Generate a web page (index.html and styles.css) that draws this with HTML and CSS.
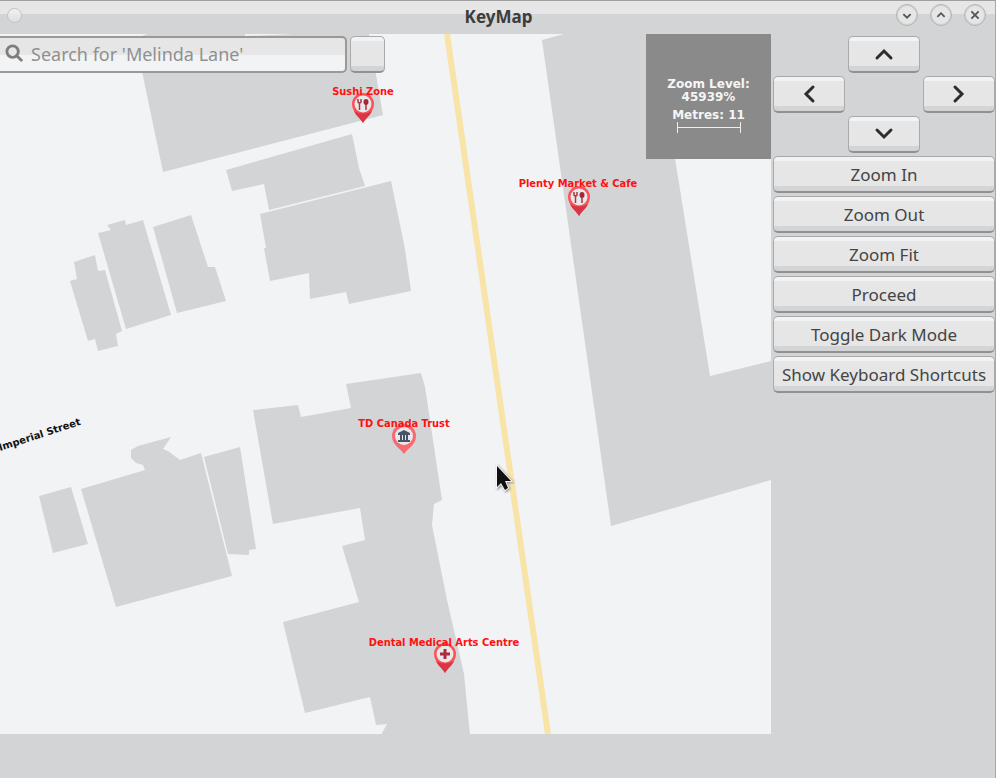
FILE: index.html
```html
<!DOCTYPE html>
<html lang="en">
<head>
<meta charset="utf-8">
<title>KeyMap</title>
<link rel="stylesheet" href="styles.css">
</head>
<body>
<div class="window">
  <header class="titlebar">
    <button class="menu-dot" aria-label="Window menu"></button>
    <h1 class="title">KeyMap</h1>
    <div class="window-buttons">
      <button class="round" aria-label="Minimize"><svg viewBox="0 0 22 22"><path d="M7 10l4 4 4-4"/></svg></button>
      <button class="round" aria-label="Maximize"><svg viewBox="0 0 22 22"><path d="M7 13l4-4 4 4"/></svg></button>
      <button class="round" aria-label="Close"><svg viewBox="0 0 22 22"><path d="M7 7l8 8M15 7l-8 8"/></svg></button>
    </div>
  </header>
  <main class="content">
    <section class="map-area">
      <svg class="map" viewBox="0 34 771 700" role="img" aria-label="Map">
        <defs>
          <g id="pin">
            <path class="pin-body" d="M0 17C-3 11-11 6-11-2A11 11 0 0 1 11-2C11 6 3 11 0 17Z"/>
            <path class="pin-shade" d="M-9 5Q0 10 9 5C7 10 3 12 0 17C-3 12-7 10-9 5Z"/>
            <circle class="pin-face" cy="-2" r="8.5"/>
          </g>
          <g id="food">
            <path class="fork" d="M-5-7v3q0 1 1.5 1t1.5-1v-3M-3.500-4v8"/>
            <ellipse class="spoon" cx="3" cy="-4" rx="2.500" ry="3"/>
            <path class="fork" d="M3-2v6"/>
          </g>
        </defs>
        <rect class="ground" y="34" width="771" height="700"/>
        <g class="buildings">
          <path d="M148 34L135 38L163 172L383 115L369 34H295L245 36V34Z"/>
          <path d="M226 170L352 134L359 168L365 186L269 210L264 184L232 191Z"/>
          <path d="M260 214L391 181L405 249L411 291L349 304L346 292L310 299L309 273L270 281L264 248H266Z"/>
          <path d="M98 233L111 230L107 225L125 220L126 225L143 220L171 315L126 329Z"/>
          <path d="M153 227L191 215L208 267L215 267L226 301L177 313Z"/>
          <path d="M74 262L95 255L98 271L105 270L122 331L116 334L118 346L98 351L95 339L88 341L70 281L77 279Z"/>
          <path d="M39 496L71 487L88 544L53 553Z"/>
          <path d="M81 489L145 470L143 465L136 463L131 458V450L138 446L171 437L163 449L168 451L180 460L201 453L232 576L116 607Z"/>
          <path d="M204 457L240 447L256 549L249 550V555L228 554Z"/>
          <path d="M253 410L298 405L301 417L351 408L346 384L421 373L425 387L442 500L434 504L432 525L447 600L464 674L470 735H381L387 724L376 725L370 697L305 713L283 622L359 602L342 546L365 540L360 508L273 524Z"/>
          <path d="M542 40L564 34H655L710 376L771 361V480L611 526Z"/>
        </g>
        <path class="road" d="M447 34L548 734"/>
        <text class="street" x="0" y="451" transform="rotate(-18 0 451)">Imperial Street</text>
        <g transform="translate(363 106)"><use href="#pin"/><use href="#food"/></g>
        <g transform="translate(579 199)"><use href="#pin"/><use href="#food"/></g>
        <g transform="translate(404 437)">
          <path class="pin-bank" d="M0 17C-3 12-12 8-12-1A12 12 0 0 1 12-1C12 8 3 12 0 17Z"/>
          <circle class="pin-face" cy="-1" r="9"/>
          <path class="bank" d="M-6-4L0-7L6-4V-2H4V3H6V5H-6V3H-4V-2H-6ZM-2-2V3H-1V-2ZM1-2V3H2V-2Z"/>
        </g>
        <g transform="translate(445 656)"><use href="#pin"/><path class="cross" d="M-5-2H5M0-7V3"/></g>
        <g class="places">
          <text x="363" y="95">Sushi Zone</text>
          <text x="578" y="187">Plenty Market &amp; Cafe</text>
          <text x="404" y="427">TD Canada Trust</text>
          <text x="444" y="646">Dental Medical Arts Centre</text>
        </g>
        <path class="cursor" d="M497 466V487L501 483L505 490L508 488L505 481H511Z"/>
      </svg>
      <form class="search">
        <label class="search-field">
          <svg class="glass" viewBox="0 0 20 20"><circle cx="8" cy="8" r="6"/><path d="M12 12l6 6"/></svg>
          <input type="text" aria-label="Search" placeholder="Search for 'Melinda Lane'">
        </label>
        <button class="btn search-go" type="button" aria-label="Search"></button>
      </form>
      <aside class="scale">
        <p>Zoom Level:<br>45939%</p>
        <p>Metres: 11</p>
        <div class="scale-bar"></div>
      </aside>
    </section>
    <nav class="controls">
      <div class="pad">
        <button class="btn up" aria-label="Up"><svg viewBox="0 0 20 20"><path d="M3 14l7-7 7 7"/></svg></button>
        <button class="btn left" aria-label="Left"><svg viewBox="0 0 20 20"><path d="M14 3l-7 7 7 7"/></svg></button>
        <button class="btn right" aria-label="Right"><svg viewBox="0 0 20 20"><path d="M6 3l7 7-7 7"/></svg></button>
        <button class="btn down" aria-label="Down"><svg viewBox="0 0 20 20"><path d="M3 6l7 7 7-7"/></svg></button>
      </div>
      <button class="btn">Zoom In</button>
      <button class="btn">Zoom Out</button>
      <button class="btn">Zoom Fit</button>
      <button class="btn">Proceed</button>
      <button class="btn">Toggle Dark Mode</button>
      <button class="btn">Show Keyboard Shortcuts</button>
    </nav>
  </main>
</div>
</body>
</html>
```
FILE: styles.css
```css
* { box-sizing: border-box; }
body { margin: 0; background: #d3d4d6; font-family: "Noto Sans", sans-serif; font-size: 18px; color: #444; }
.window { min-height: 100vh; border-top: 1px solid #a0a0a0; border-right: 1px solid #a8a8a8; }
.titlebar { height: 33px; display: grid; grid-template-columns: 1fr auto 1fr; align-items: center; padding: 0 9px 6px 7px; background: linear-gradient(#e6e6e6 13px, #d3d4d6 13px); }
.title { margin: 0; padding: 4px 0 0 4px; font-size: 17px; line-height: 24px; font-weight: 700; color: #3c3c3c; }
.menu-dot { width: 15px; height: 15px; padding: 0; border: 1px solid #c2c2c2; border-radius: 50%; background: linear-gradient(#f2f2f2, #dedede); }
.window-buttons { display: flex; justify-content: flex-end; gap: 12px; }
.round { width: 22px; height: 22px; padding: 0; border: 1px solid #b4b4b4; border-radius: 50%; background: #e6e6e6; box-shadow: inset 0 0 0 1px #d0d0d0; }
.round svg { display: block; width: 20px; height: 20px; fill: none; stroke: #555; stroke-width: 2; }

.content { display: flex; align-items: flex-start; }
.map-area { position: relative; flex: 1; min-width: 0; }
.map { display: block; width: 100%; height: auto; }
.ground { fill: #f1f3f5; }
.buildings { fill: #d3d4d6; }
.road { stroke: #f9e4a7; stroke-width: 6; }
.street { font: bold 10px "DejaVu Sans", sans-serif; fill: #111; }
.places { font: bold 11px "DejaVu Sans Condensed", "DejaVu Sans", sans-serif; fill: #f11; text-anchor: middle; }
.pin-body { fill: #ff5058; }
.pin-shade { fill: #d93644; }
.pin-bank { fill: #f96a70; }
.pin-face { fill: #e6e8ea; }
.fork { fill: none; stroke: #ab3541; stroke-width: 1.5; }
.spoon { fill: #a82735; }
.bank { fill: #48536a; fill-rule: evenodd; }
.cross { stroke: #ab2d3d; stroke-width: 3; }
.cursor { fill: #111; stroke: #f5f5f5; stroke-width: 2; paint-order: stroke; filter: drop-shadow(1px 1px 1px #888); }

.search { position: absolute; top: 2px; left: 0; display: flex; gap: 3px; }
.search-field { display: flex; align-items: center; width: 347px; height: 37px; gap: 7px; padding: 0 0 2px 5px; border: 2px solid #999; border-left: 0; border-radius: 0 5px 5px 0; background: linear-gradient(#e6e6e6 50%, #f1f3f5 50%); }
.search-field input { flex: 1; min-width: 0; padding: 0; border: 0; outline: 0; background: none; font: inherit; }
.search-field input::placeholder { color: #909090; opacity: 1; }
.glass { width: 19px; height: 19px; fill: none; stroke: #7d7d7d; stroke-width: 3; }
.search-go { width: 35px; }

.scale { position: absolute; top: 0; right: 0; width: 125px; height: 125px; padding-top: 44px; background: #8a8a8a; color: #f5f5f5; font: bold 12px/13px "DejaVu Sans", sans-serif; text-align: center; }
.scale p { margin: 0 0 5px; }
.scale .scale-bar { width: 64px; height: 11px; margin: -5px auto 0; border: solid #eee; border-width: 0 1px; background: linear-gradient(#eee, #eee) center / 100% 1px no-repeat; }

.controls { display: flex; flex-direction: column; gap: 3px; width: 224px; padding: 2px 0 2px 2px; }
.pad { display: grid; grid-template-columns: repeat(3, 1fr); gap: 3px; }
.up, .down { grid-column: 2; }
.left { grid-column: 1; }
.right { grid-column: 3; }
.btn { display: flex; align-items: center; justify-content: center; height: 37px; padding: 0; border: 1px solid #aaa; border-bottom: 2px solid #919191; border-radius: 5px; background: linear-gradient(#f1f3f5 4px, #e6e6e6 4px, #e6e6e6 29px, #d3d4d6 29px); color: #444; font: inherit; font-size: 17px; white-space: nowrap; }
.btn svg { width: 20px; height: 20px; fill: none; stroke: #2d2d2d; stroke-width: 3; stroke-linecap: round; }
```
